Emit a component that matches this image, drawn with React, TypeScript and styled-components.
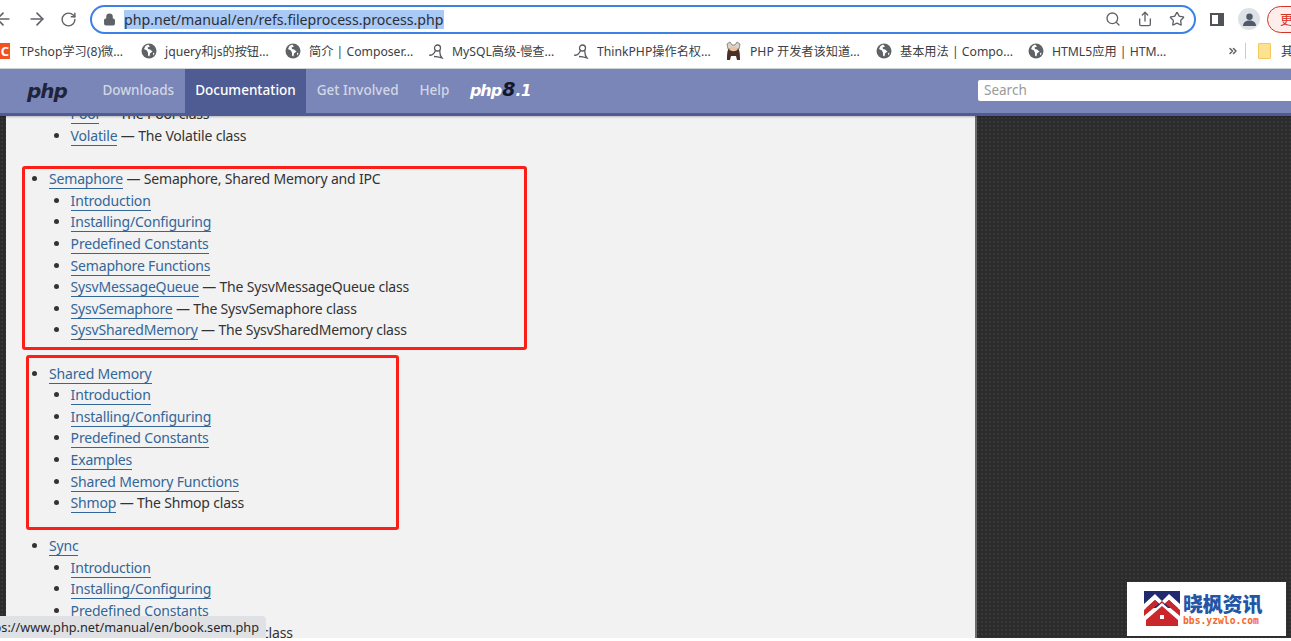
import React from "react";
import styled, { createGlobalStyle } from "styled-components";
import { ArrowLeft, ArrowRight, RotateCw, Lock, Search, Share, Star, ChevronsRight } from "lucide-react";

const UI_FONT = `"Noto Sans", "Noto Sans CJK SC", sans-serif`;

const GlobalStyle = createGlobalStyle`
  html, body {
    margin: 0;
    padding: 0;
    height: 100%;
    overflow: hidden;
    background: #fff;
  }
  #root {
    height: 100%;
  }
`;

/* ------------- browser chrome */

const Page = styled.div`
  position: relative;
  width: 1291px;
  height: 641px;
  padding-bottom: 3px;
  box-sizing: border-box;
  overflow: hidden;
  display: flex;
  flex-direction: column;
  font-family: ${UI_FONT};
`;

const Toolbar = styled.div`
  height: 35px;
  flex: none;
  display: flex;
  align-items: center;
  margin-left: -14px;
  padding-top: 3px;
  box-sizing: border-box;
  background: #fff;
  color: #5f6368;
`;

const NavIcon = styled.div<{ $width: number }>`
  width: ${(p) => p.$width}px;
  display: flex;
  justify-content: center;
  flex: none;
`;

const AddressBar = styled.div`
  width: 1106px;
  height: 29px;
  margin-left: 8px;
  box-sizing: border-box;
  border: 2px solid #3d80e6;
  border-radius: 15px;
  display: flex;
  align-items: center;
  flex: none;
  padding: 0 9px 0 11px;
`;

const Url = styled.span`
  margin-left: 8px;
  background: #a9c9f6;
  color: #2b2f36;
  font-size: 14.15px;
  line-height: 19px;
  white-space: nowrap;
`;

const AddressActions = styled.div`
  margin-left: auto;
  display: flex;
  gap: 16px;
  align-items: center;
  color: #5f6368;
`;

const SidePanelIcon = styled.div`
  width: 6px;
  height: 9px;
  margin-left: 14px;
  flex: none;
  border: 2px solid #50545a;
  border-right-width: 6px;
`;

const Avatar = styled.div`
  width: 22px;
  height: 22px;
  border-radius: 50%;
  margin-left: 14px;
  flex: none;
  background: #dee1e6;
  display: flex;
  align-items: center;
  justify-content: center;
`;

const UpdatePill = styled.div`
  margin-left: 7px;
  width: 60px;
  height: 27px;
  flex: none;
  box-sizing: border-box;
  border: 1px solid #d93025;
  border-radius: 14px;
  background: #fdeeec;
  color: #d93025;
  font-size: 13px;
  line-height: 25px;
  padding-left: 12px;
`;

const Bookmarks = styled.div`
  height: 34px;
  flex: none;
  display: flex;
  align-items: center;
  margin-left: -10px;
  padding-bottom: 2px;
  box-sizing: border-box;
  background: #fff;
  border-bottom: 1px solid #d4d6da;
  white-space: nowrap;
`;

const Bookmark = styled.div<{ $width: number }>`
  width: ${(p) => p.$width}px;
  flex: none;
  display: flex;
  align-items: center;
  gap: 8px;
  font-size: 12.2px;
  color: #3c4043;
`;

const OrangeIcon = styled.div`
  width: 20px;
  height: 16px;
  margin-right: 2px;
  flex: none;
  background: #f4511e;
  color: #fff;
  font-size: 13px;
  line-height: 16px;
  text-align: right;
  padding-right: 1px;
  box-sizing: border-box;
  font-weight: 700;
`;

const MoreIcon = styled(ChevronsRight)`
  flex: none;
  color: #5f6368;
`;

const Separator = styled.div`
  width: 1px;
  height: 16px;
  margin: 0 12px 0 6px;
  background: #c8cacd;
  flex: none;
`;

const FolderIcon = styled.div`
  width: 11px;
  height: 14px;
  flex: none;
  background: #fde293;
  border: 1px solid #f3c95c;
  border-radius: 1px;
`;

const FolderLabel = styled.span`
  margin-left: 10px;
  font-size: 12.2px;
  color: #3c4043;
`;

const Globe = () => (
  <svg width="16" height="16" viewBox="0 0 16 16" style={{ flex: "none" }}>
    <circle cx="8" cy="8" r="7.5" fill="#5f6368" />
    <path d="M7 1.500 4.500 3 3 6l3 1.500 1 2.500v2.500l1.500 1 .5-3 2.500-2L9 6.500 7 6 6.500 4.500 9 3.500ZM12 10.500l1-1 .5 1-1.500 2Z" fill="#fff" />
  </svg>
);

const BrushIcon = () => (
  <svg width="16" height="16" viewBox="0 0 16 16" style={{ flex: "none" }} fill="none" stroke="#55585c" strokeWidth="1.300">
    <circle cx="9.500" cy="5" r="3" />
    <path d="M1 12c3 1 5-1 6.500-4.500M12 7.500c-.5 3 0 5 2 7.500-3-1-6-1.500-8-1.500" />
  </svg>
);

const AvatarFavicon = () => (
  <svg width="17" height="19" viewBox="0 0 17 19" style={{ flex: "none" }}>
    <path d="M2 3 5 1l2 3 3 0 2-3 3 2-1 5H3Z" fill="#d9d4cc" stroke="#6d625a" strokeWidth=".7" />
    <circle cx="8.500" cy="10" r="4.500" fill="#e9c4a4" />
    <path d="M2 19c0-9 1-11 2-11 2 3 7 3 9 0 1 0 2 2 2 11h-3l-1-4H6l-1 4Z" fill="#4a3027" />
  </svg>
);

/* ------------- php.net header */

const SiteNav = styled.nav`
  height: 47px;
  flex: none;
  display: flex;
  box-sizing: border-box;
  background: #7a86b8;
  border-bottom: 3px solid #4f5b93;
  box-shadow: 0 1px 2px rgba(0, 0, 0, 0.25);
  padding-left: 27px;
  position: relative;
  z-index: 2;
`;

const PhpLogo = styled.span<{ $light?: boolean }>`
  font-family: "DejaVu Sans", sans-serif;
  font-style: italic;
  font-weight: 700;
  letter-spacing: -1px;
  line-height: 44px;
  font-size: ${(p) => (p.$light ? 16 : 20)}px;
  color: ${(p) => (p.$light ? "#fff" : "#20243a")};
`;

const NavLinks = styled.div`
  display: flex;
  margin-left: 25px;
`;

const NavLink = styled.a<{ $active?: boolean }>`
  height: 44px;
  padding: 0 10.5px;
  font-size: 13.5px;
  line-height: 42px;
  font-weight: 500;
  color: ${(p) => (p.$active ? "#fff" : "#d2d6e6")};
  background: ${(p) => (p.$active ? "#4f5b93" : "transparent")};
`;

const VersionLogo = styled.div`
  margin-left: 10px;
  display: flex;
  align-items: baseline;
  height: 44px;
  white-space: nowrap;
`;

const VersionEight = styled.span`
  font-family: "DejaVu Sans", sans-serif;
  font-style: italic;
  font-weight: 700;
  font-size: 19px;
  margin-left: 1px;
  color: #14162a;
`;

const VersionDigits = styled.span`
  font-family: "DejaVu Sans", sans-serif;
  font-style: italic;
  font-weight: 700;
  font-size: 15px;
  color: #fff;
`;

const SearchBox = styled.div`
  position: absolute;
  top: 11px;
  left: 978px;
  width: 320px;
  height: 21px;
  background: #fff;
  border-radius: 2px;
  padding-left: 6px;
  box-sizing: border-box;
  color: #9a9a9a;
  font-size: 13.5px;
  line-height: 20px;
`;

/* ------------- page content */

const Body = styled.div`
  flex: 1;
  min-height: 0;
  display: flex;
  background-color: #2c2c2c;
  background-image: radial-gradient(#383838 1px, transparent 1px);
  background-size: 4px 4px;
`;

const Main = styled.main`
  width: 969px;
  margin-left: 6px;
  flex: none;
  overflow: hidden;
  background: #f2f2f2;
  border-right: 2px solid #6b6b6b;
  color: #333;
  font-size: 14px;
  line-height: 21.6px;
  letter-spacing: -0.18px;
`;

const List = styled.ul<{ $nested?: boolean }>`
  margin: ${(p) => (p.$nested ? "0" : "-12.6px 0 0")};
  padding: ${(p) => (p.$nested ? "0 0 0 21.6px" : "0 0 0 43px")};
  list-style: disc;
`;

const Group = styled.li`
  margin-bottom: 21.6px;
`;

const Item = styled.li``;

const DocLink = styled.a`
  color: #336699;
  border-bottom: 1px solid #336699;
`;

/* ------------- overlays */

const RedFrame = styled.div<{ $left: number; $top: number; $w: number; $h: number }>`
  position: absolute;
  left: ${(p) => p.$left}px;
  top: ${(p) => p.$top}px;
  width: ${(p) => p.$w}px;
  height: ${(p) => p.$h}px;
  box-sizing: border-box;
  border: 3px solid #fb1f17;
  border-radius: 3px;
  z-index: 3;
`;

const StatusBubble = styled.div`
  position: absolute;
  left: 0;
  bottom: 3px;
  width: 266px;
  height: 22px;
  background: #dfe1e5;
  border-top-right-radius: 4px;
  overflow: hidden;
  color: #26282c;
  font-size: 12.7px;
  line-height: 23px;
  white-space: nowrap;
  direction: rtl;
  padding-right: 7px;
  box-sizing: border-box;
  z-index: 4;
`;

const Watermark = styled.div`
  position: absolute;
  left: 1127px;
  top: 582px;
  width: 159px;
  height: 54px;
  background: #fff;
  display: flex;
  align-items: center;
  padding-left: 17px;
  box-sizing: border-box;
  gap: 3px;
  z-index: 4;
`;

const WatermarkText = styled.div`
  display: flex;
  flex-direction: column;
`;

const WatermarkTitle = styled.span`
  color: #2455a5;
  font-family: "Noto Sans CJK SC", sans-serif;
  font-weight: 900;
  font-size: 20px;
  line-height: 22px;
  letter-spacing: -0.2px;
`;

const WatermarkSub = styled.span`
  color: #f4682b;
  font-family: "DejaVu Sans Mono", monospace;
  font-weight: 700;
  font-size: 9.7px;
  line-height: 11px;
`;

const HouseLogo = () => (
  <svg width="36" height="36" viewBox="0 0 36 36" style={{ flex: "none" }}>
    <rect width="36" height="17" fill="#23296e" />
    <path d="M0 13 11 3l7 7 7-7 11 10v6L25 9l-7 6-7-6L0 19Z" fill="#fff" />
    <path d="M0 19 11 9l7 6 7-6 11 10v6L18 10 0 25Z" fill="#c9272c" />
    <path d="M0 27 18 12l18 15v2H31v7H5v-7H0Z" fill="#fff" />
    <path d="M2 35v-6L18 15l16 14v6Z" fill="#c9272c" />
    <rect x="16" y="24" width="4" height="4" fill="#fff" />
  </svg>
);

/* ------------- content */

const bookmarks = [
  { label: "TPshop学习(8)微...", width: 151, icon: <OrangeIcon>C</OrangeIcon> },
  { label: "jquery和js的按钮...", width: 144, icon: <Globe /> },
  { label: "简介 | Composer...", width: 143, icon: <Globe /> },
  { label: "MySQL高级-慢查...", width: 145, icon: <BrushIcon /> },
  { label: "ThinkPHP操作名权...", width: 152, icon: <BrushIcon /> },
  { label: "PHP 开发者该知道...", width: 151, icon: <AvatarFavicon /> },
  { label: "基本用法 | Compo...", width: 152, icon: <Globe /> },
  { label: "HTML5应用 | HTM...", width: 199, icon: <Globe /> }
];

type Row = { name: string; note?: string };

const groups: { name: string; note?: string; rows: Row[] }[] = [
  {
    name: "Semaphore",
    note: "Semaphore, Shared Memory and IPC",
    rows: [
      { name: "Introduction" },
      { name: "Installing/Configuring" },
      { name: "Predefined Constants" },
      { name: "Semaphore Functions" },
      { name: "SysvMessageQueue", note: "The SysvMessageQueue class" },
      { name: "SysvSemaphore", note: "The SysvSemaphore class" },
      { name: "SysvSharedMemory", note: "The SysvSharedMemory class" }
    ]
  },
  {
    name: "Shared Memory",
    rows: [
      { name: "Introduction" },
      { name: "Installing/Configuring" },
      { name: "Predefined Constants" },
      { name: "Examples" },
      { name: "Shared Memory Functions" },
      { name: "Shmop", note: "The Shmop class" }
    ]
  },
  {
    name: "Sync",
    rows: [
      { name: "Introduction" },
      { name: "Installing/Configuring" },
      { name: "Predefined Constants" },
      { name: "SyncMutex", note: "The SyncMutex class" }
    ]
  }
];

const Rows = ({ rows }: { rows: Row[] }) => (
  <List $nested>
    {rows.map((row) => (
      <Item key={row.name}>
        <DocLink>{row.name}</DocLink>
        {row.note && ` — ${row.note}`}
      </Item>
    ))}
  </List>
);

export default function App() {
  return (
    <Page>
      <GlobalStyle />
      <Toolbar>
        <NavIcon $width={34}>
          <ArrowLeft size={20} />
        </NavIcon>
        <NavIcon $width={34}>
          <ArrowRight size={20} />
        </NavIcon>
        <NavIcon $width={28}>
          <RotateCw size={17} />
        </NavIcon>
        <AddressBar>
          <Lock size={13} fill="#5f6368" />
          <Url>php.net/manual/en/refs.fileprocess.process.php</Url>
          <AddressActions>
            <Search size={16} />
            <Share size={16} />
            <Star size={16} />
          </AddressActions>
        </AddressBar>
        <SidePanelIcon />
        <Avatar>
          <svg width="13" height="13" viewBox="0 0 12 12">
            <circle cx="6" cy="3.500" r="3" fill="#4f5b6b" />
            <path d="M0 12c0-3.500 3-5 6-5s6 1.500 6 5Z" fill="#4f5b6b" />
          </svg>
        </Avatar>
        <UpdatePill>更新</UpdatePill>
      </Toolbar>

      <Bookmarks>
        {bookmarks.map((b) => (
          <Bookmark key={b.label} $width={b.width}>
            {b.icon}
            {b.label}
          </Bookmark>
        ))}
        <MoreIcon size={12} strokeWidth={3} />
        <Separator />
        <FolderIcon />
        <FolderLabel>其他书签</FolderLabel>
      </Bookmarks>

      <SiteNav>
        <PhpLogo>php</PhpLogo>
        <NavLinks>
          <NavLink>Downloads</NavLink>
          <NavLink $active>Documentation</NavLink>
          <NavLink>Get Involved</NavLink>
          <NavLink>Help</NavLink>
        </NavLinks>
        <VersionLogo>
          <PhpLogo $light>php</PhpLogo>
          <VersionEight>8</VersionEight>
          <VersionDigits>.1</VersionDigits>
        </VersionLogo>
        <SearchBox>Search</SearchBox>
      </SiteNav>

      <Body>
        <Main>
          <List>
            <Group>
              <Rows
                rows={[
                  { name: "Pool", note: "The Pool class" },
                  { name: "Volatile", note: "The Volatile class" }
                ]}
              />
            </Group>
            {groups.map((g) => (
              <Group key={g.name}>
                <DocLink>{g.name}</DocLink>
                {g.note && ` — ${g.note}`}
                <Rows rows={g.rows} />
              </Group>
            ))}
          </List>
        </Main>
      </Body>

      <RedFrame $left={22} $top={166} $w={505} $h={184} />
      <RedFrame $left={26} $top={355} $w={373} $h={175} />

      <StatusBubble>
        <bdi>https://www.php.net/manual/en/book.sem.php</bdi>
      </StatusBubble>

      <Watermark>
        <HouseLogo />
        <WatermarkText>
          <WatermarkTitle>晓枫资讯</WatermarkTitle>
          <WatermarkSub>bbs.yzwlo.com</WatermarkSub>
        </WatermarkText>
      </Watermark>
    </Page>
  );
}
